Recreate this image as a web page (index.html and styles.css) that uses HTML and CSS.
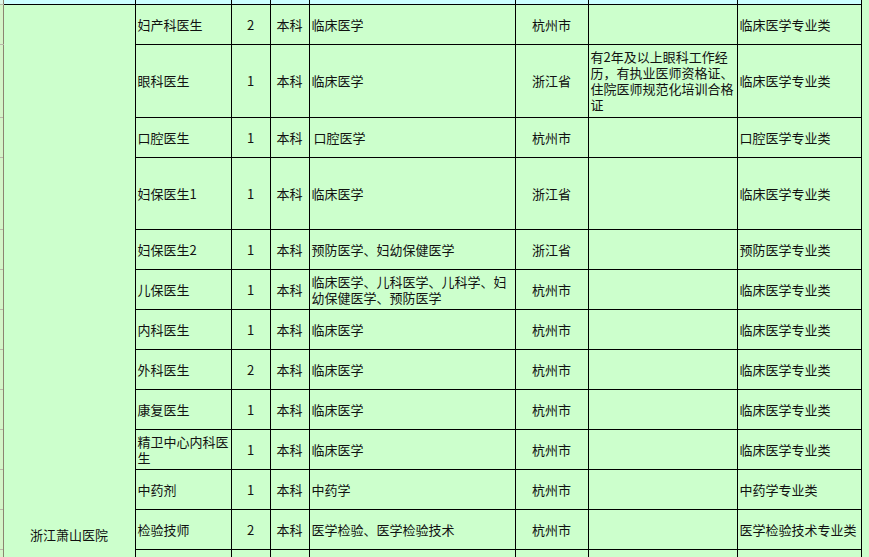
FILE: index.html
```html
<!DOCTYPE html>
<html lang="zh">
<head>
<meta charset="utf-8">
<title>招聘岗位表</title>
<link rel="stylesheet" href="styles.css">
</head>
<body>
<table class="sheet">
  <colgroup>
    <col class="c-strip">
    <col class="c-unit">
    <col class="c-post">
    <col class="c-num">
    <col class="c-edu">
    <col class="c-major">
    <col class="c-area">
    <col class="c-other">
    <col class="c-type">
    <col class="c-edge">
  </colgroup>
  <tr class="r-top">
    <td class="strip top"></td>
    <td class="top"></td><td class="top"></td><td class="top"></td><td class="top"></td>
    <td class="top"></td><td class="top"></td><td class="top"></td><td class="top"></td>
    <td class="edge"></td>
  </tr>
  <tr class="r40">
    <td class="strip"></td>
    <td class="unit" rowspan="13">浙江萧山医院</td>
    <td class="l">妇产科医生</td><td class="c">2</td><td class="c">本科</td><td class="l">临床医学</td><td class="c">杭州市</td><td class="l"></td><td class="l">临床医学专业类</td>
    <td class="edge"></td>
  </tr>
  <tr class="r73">
    <td class="strip"></td>
    <td class="l">眼科医生</td><td class="c">1</td><td class="c">本科</td><td class="l">临床医学</td><td class="c">浙江省</td><td class="l">有2年及以上眼科工作经<br>历，有执业医师资格证、<br>住院医师规范化培训合格<br>证</td><td class="l">临床医学专业类</td>
    <td class="edge"></td>
  </tr>
  <tr class="r40">
    <td class="strip"></td>
    <td class="l">口腔医生</td><td class="c">1</td><td class="c">本科</td><td class="l ind">口腔医学</td><td class="c">杭州市</td><td class="l"></td><td class="l">口腔医学专业类</td>
    <td class="edge"></td>
  </tr>
  <tr class="r74">
    <td class="strip"></td>
    <td class="l">妇保医生1</td><td class="c">1</td><td class="c">本科</td><td class="l">临床医学</td><td class="c">浙江省</td><td class="l"></td><td class="l">临床医学专业类</td>
    <td class="edge"></td>
  </tr>
  <tr class="r40">
    <td class="strip"></td>
    <td class="l">妇保医生2</td><td class="c">1</td><td class="c">本科</td><td class="l">预防医学、妇幼保健医学</td><td class="c">浙江省</td><td class="l"></td><td class="l">预防医学专业类</td>
    <td class="edge"></td>
  </tr>
  <tr class="r40">
    <td class="strip"></td>
    <td class="l">儿保医生</td><td class="c">1</td><td class="c">本科</td><td class="l">临床医学、儿科医学、儿科学、妇<br>幼保健医学、预防医学</td><td class="c">杭州市</td><td class="l"></td><td class="l">临床医学专业类</td>
    <td class="edge"></td>
  </tr>
  <tr class="r40">
    <td class="strip"></td>
    <td class="l">内科医生</td><td class="c">1</td><td class="c">本科</td><td class="l">临床医学</td><td class="c">杭州市</td><td class="l"></td><td class="l">临床医学专业类</td>
    <td class="edge"></td>
  </tr>
  <tr class="r40">
    <td class="strip"></td>
    <td class="l">外科医生</td><td class="c">2</td><td class="c">本科</td><td class="l">临床医学</td><td class="c">杭州市</td><td class="l"></td><td class="l">临床医学专业类</td>
    <td class="edge"></td>
  </tr>
  <tr class="r40">
    <td class="strip"></td>
    <td class="l">康复医生</td><td class="c">1</td><td class="c">本科</td><td class="l">临床医学</td><td class="c">杭州市</td><td class="l"></td><td class="l">临床医学专业类</td>
    <td class="edge"></td>
  </tr>
  <tr class="r40">
    <td class="strip"></td>
    <td class="l">精卫中心内科医<br>生</td><td class="c">1</td><td class="c">本科</td><td class="l">临床医学</td><td class="c">杭州市</td><td class="l"></td><td class="l">临床医学专业类</td>
    <td class="edge"></td>
  </tr>
  <tr class="r40">
    <td class="strip"></td>
    <td class="l">中药剂</td><td class="c">1</td><td class="c">本科</td><td class="l">中药学</td><td class="c">杭州市</td><td class="l"></td><td class="l">中药学专业类</td>
    <td class="edge"></td>
  </tr>
  <tr class="r40">
    <td class="strip"></td>
    <td class="l">检验技师</td><td class="c">2</td><td class="c">本科</td><td class="l">医学检验、医学检验技术</td><td class="c">杭州市</td><td class="l"></td><td class="l">医学检验技术专业类</td>
    <td class="edge"></td>
  </tr>
  <tr class="r40">
    <td class="strip"></td>
    <td class="l"></td><td class="c"></td><td class="c"></td><td class="l"></td><td class="c"></td><td class="l"></td><td class="l"></td>
    <td class="edge"></td>
  </tr>
</table>
</body>
</html>
```

FILE: styles.css
```css
html, body {
  margin: 0;
  padding: 0;
  background: #ccffcc;
  overflow: hidden;
}

body {
  width: 869px;
  height: 557px;
  font-family: "Noto Sans CJK SC", "Noto Sans", sans-serif;
  font-size: 13px;
  color: #111;
}

.sheet {
  border-collapse: collapse;
  table-layout: fixed;
  width: 869px;
  background: #ccffcc;
}

.c-strip { width: 3px; }
.c-unit  { width: 132px; }
.c-post  { width: 96px; }
.c-num   { width: 39px; }
.c-edu   { width: 39px; }
.c-major { width: 206px; }
.c-area  { width: 73px; }
.c-other { width: 149px; }
.c-type  { width: 124px; }
.c-edge  { width: 12px; }

.sheet td {
  padding: 0 0 0 2px;
  border: 1px solid #000;
  line-height: 16px;
  vertical-align: middle;
  white-space: nowrap;
  overflow: hidden;
}

.r-top td {
  height: 4px;
  line-height: 0;
  font-size: 0;
}
.r40 td { height: 39px; }
.r73 td { height: 72px; }
.r74 td { height: 71px; }

.sheet td.top {
  background: #ccffff;
  border-top: none;
}

.sheet td.strip {
  padding: 0;
  border-left: none;
  border-top: 1px solid #b8b8a8;
  border-bottom: 1px solid #b8b8a8;
  border-right: 1px solid #8c8470;
  background: #d4f5c8;
}

.sheet td.strip.top {
  background: #ddf5e6;
  border-top: none;
}

.sheet td.edge {
  border-top: none;
  border-bottom: none;
  border-right: none;
  padding: 0;
  background: #ccffcc;
}

.sheet td.l { text-align: left; }
.sheet td.c { text-align: center; padding: 0; }
.sheet td.ind { padding-left: 4px; }

.sheet td.unit {
  text-align: center;
  vertical-align: bottom;
  padding: 0 0 46px 0;
  border-left: 1px solid #8c8470;
}
```
